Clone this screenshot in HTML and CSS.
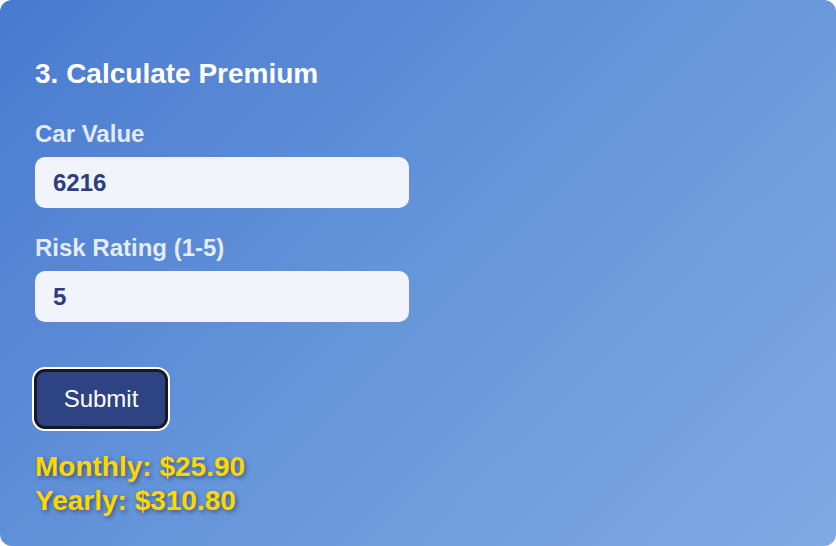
FILE: index.html
```html
<!DOCTYPE html>
<html lang="en">
<head>
<meta charset="utf-8">
<title>Calculate Premium</title>
<link rel="stylesheet" href="styles.css">
</head>
<body>
<main class="card">
  <h2 class="title">3. Calculate Premium</h2>
  <div class="field">
    <label class="label" for="carValue">Car Value</label>
    <input class="input" id="carValue" type="text" value="6216">
  </div>
  <div class="field">
    <label class="label" for="risk">Risk Rating (1-5)</label>
    <input class="input" id="risk" type="text" value="5">
  </div>
  <button class="submit" type="button">Submit</button>
  <div class="results">
    <div class="result">Monthly: $25.90</div>
    <div class="result">Yearly: $310.80</div>
  </div>
</main>
</body>
</html>
```
FILE: styles.css
```css
html {
  background: #ffffff;
}
body {
  margin: 0;
  font-family: "Liberation Sans", Arial, sans-serif;
}
.card {
  box-sizing: border-box;
  height: 546px;
  border-radius: 12px;
  padding: 0 35px;
  background: linear-gradient(135deg, #4a7acf 0%, #6595da 50%, #80aae3 100%);
  display: flex;
  flex-direction: column;
  align-items: flex-start;
}
.title {
  margin: 58px 0 0 0;
  font-size: 28px;
  line-height: 32px;
  font-weight: 700;
  color: #ffffff;
}
.field {
  display: flex;
  flex-direction: column;
  align-items: flex-start;
}
.field:first-of-type {
  margin-top: 30px;
}
.field + .field {
  margin-top: 26px;
}
.label {
  font-size: 24px;
  line-height: 28px;
  font-weight: 700;
  color: rgba(255, 255, 255, 0.85);
  margin-bottom: 9px;
}
.input {
  box-sizing: border-box;
  width: 374px;
  height: 51px;
  border: none;
  border-radius: 10px;
  padding: 0 18px;
  background: #f1f5fb;
  font-family: "Liberation Sans", Arial, sans-serif;
  font-size: 24px;
  font-weight: 700;
  color: #2c3e80;
  outline: none;
}
.submit {
  margin-top: 47px;
  margin-left: -1px;
  box-sizing: border-box;
  width: 134px;
  height: 60px;
  border: 3px solid #16182a;
  border-radius: 11px;
  box-shadow: 0 0 0 2px #ffffff;
  background: #2e4382;
  color: #ffffff;
  font-family: "Liberation Sans", Arial, sans-serif;
  font-size: 24px;
  padding: 0;
}
.results {
  margin-top: 21px;
}
.result {
  font-size: 28px;
  line-height: 34px;
  font-weight: 700;
  color: #ffd700;
  text-shadow: 2px 2px 4px rgba(0, 0, 0, 0.4);
}
```
